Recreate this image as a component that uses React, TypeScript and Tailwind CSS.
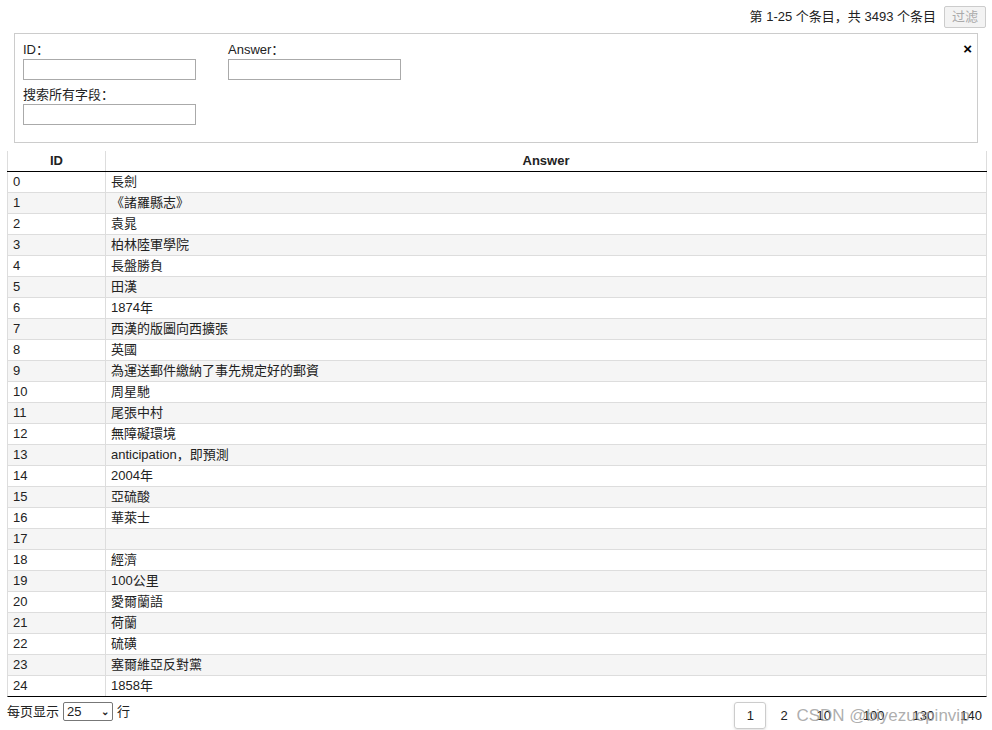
const rows = ["長劍","《諸羅縣志》","袁晁","柏林陸軍學院","長盤勝負","田漢","1874年","西漢的版圖向西擴張","英國","為運送郵件繳納了事先規定好的郵資","周星馳","尾張中村","無障礙環境","anticipation，即預測","2004年","亞硫酸","華萊士","","經濟","100公里","愛爾蘭語","荷蘭","硫磺","塞爾維亞反對黨","1858年"];

export default function App() {
  return (
    <div className="w-[992px] h-[730px] bg-white text-[13px] text-[#222] overflow-hidden relative" style={{fontFamily:'"Liberation Sans", Arial, "Noto Sans CJK SC", sans-serif'}}>
      <div className="flex justify-end items-center gap-2 pt-[5px] pr-[6px] h-[29px]">
        <span>第 1-25 个条目，共 3493 个条目</span>
        <span className="border border-[#ccc] bg-[#f3f3f3] text-[#aaa] rounded-[2px] px-[7px] h-[22px] flex items-center">过滤</span>
      </div>
      <div className="mx-[14px] mt-[4px] h-[110px] border border-[#ccc] relative px-[8px] pt-[8px]">
        <span className="absolute right-[5px] top-[4px] font-bold text-[15px] text-black">×</span>
        <div className="flex gap-[32px]">
          <div><div className="leading-[16px]">ID：</div><div className="w-[173px] h-[21px] border border-[#aaa] mt-[1px]" /></div>
          <div><div className="leading-[16px]">Answer：</div><div className="w-[173px] h-[21px] border border-[#aaa] mt-[1px]" /></div>
        </div>
        <div className="mt-[7px]"><div className="leading-[16px]">搜索所有字段：</div><div className="w-[173px] h-[21px] border border-[#aaa] mt-[1px]" /></div>
      </div>
      <div className="mx-[7px] mt-[8px] w-[980px]">
        <div className="flex h-[21px] border-b border-black font-bold items-center">
          <div className="w-[98px] text-center border-l border-[#ddd] h-full flex items-center justify-center">ID</div>
          <div className="flex-1 text-center border-l border-r border-[#ddd] h-full flex items-center justify-center">Answer</div>
        </div>
        {rows.map((r,i)=>(
          <div key={i} className={`flex h-[21px] items-center border-b border-l border-r border-[#ddd] ${i%2?'bg-[#f5f5f5]':'bg-white'} ${i===24?'border-b-black':''}`}>
            <div className="w-[98px] pl-[5px] border-r border-[#ddd] h-full flex items-center">{i}</div>
            <div className="flex-1 pl-[5px]">{r}</div>
          </div>
        ))}
      </div>
      <div className="flex items-start justify-between px-[7px] mt-[5px]">
        <div className="flex items-center gap-[4px] h-[19px]">
          <span>每页显示</span>
          <span className="border border-[#777] rounded-[2px] h-[19px] w-[50px] px-[3px] flex items-center justify-between">25 <span className="text-[10px] font-bold">⌄</span></span>
          <span>行</span>
        </div>
        <div className="flex items-center mr-[3px] relative">
          <span className="w-[32px] h-[27px] border border-[#ccc] rounded-[3px] flex items-center justify-center shadow-sm">1</span>
          <span className="ml-[14px] w-[14px]">2</span>
          <span className="ml-[22px]">10</span>
          <span className="ml-[32px]">100</span>
          <span className="ml-[28px]">130</span>
          <span className="ml-[26px]">140</span>
          <span className="absolute left-[62px] top-[1px] text-[17px] text-[#999]/80 whitespace-nowrap">CSDN @biyezuopinvip</span>
        </div>
      </div>
    </div>
  );
}
